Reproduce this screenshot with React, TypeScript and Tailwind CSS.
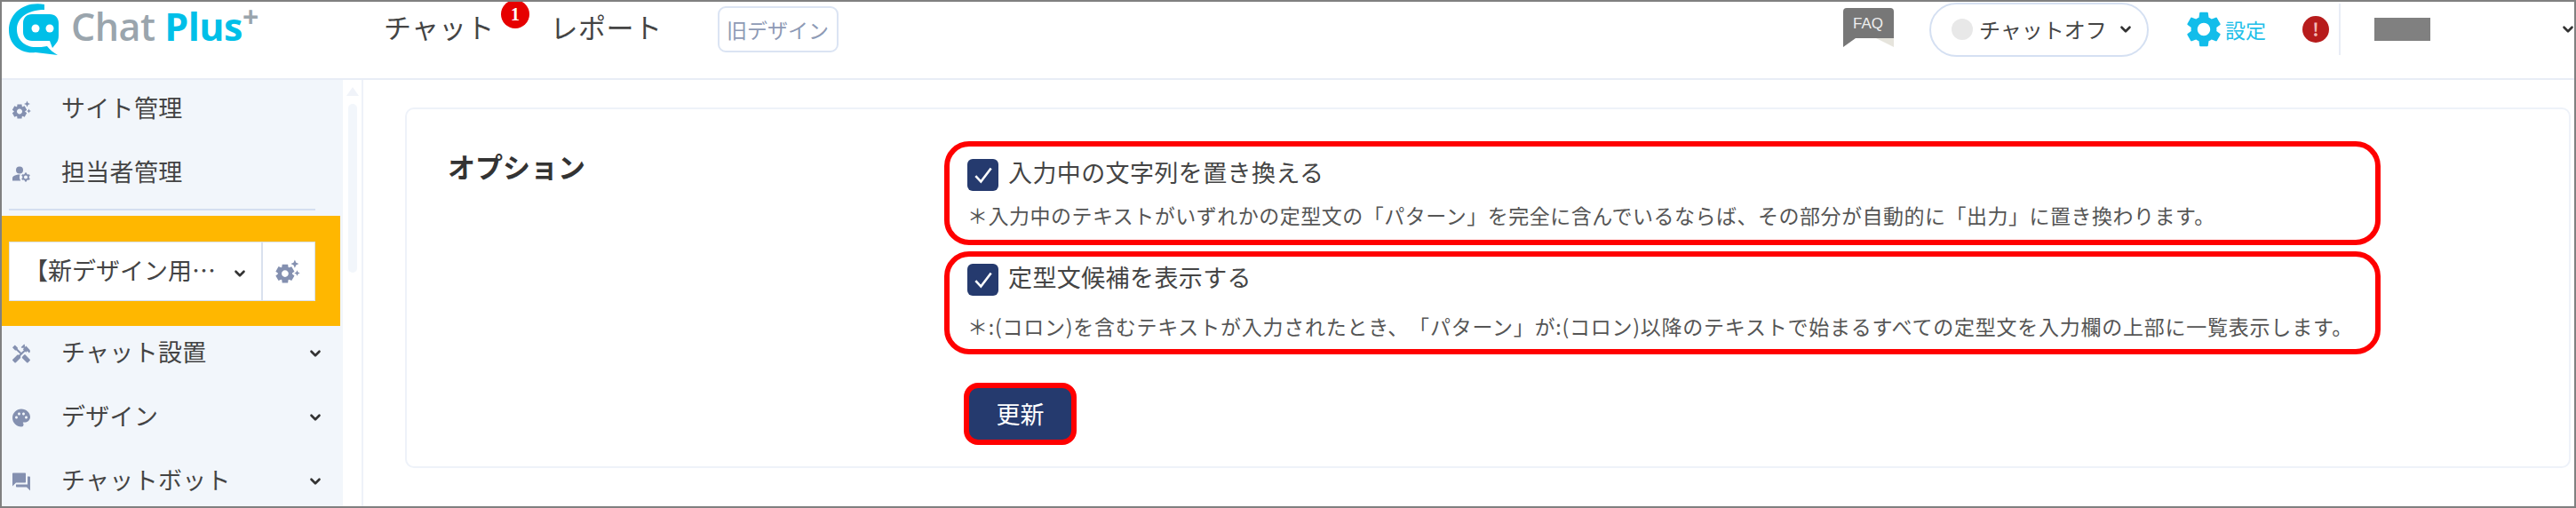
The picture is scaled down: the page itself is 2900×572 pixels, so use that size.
import { ChevronDown } from "lucide-react";
import {
  MdHandyman,
  MdManageAccounts,
  MdPalette,
  MdQuestionAnswer,
  MdSettings,
  MdSettingsSuggest,
} from "react-icons/md";
import type { ReactNode } from "react";

const jpFont = "font-['Noto_Sans_CJK_JP','Noto_Sans',sans-serif] [text-spacing-trim:space-all]";

const SideItem = ({ icon, label, arrow }: { icon: ReactNode; label: string; arrow?: boolean }) => (
  <div className="flex items-center h-[40px] pl-[10px] pr-[22px] text-[27px] text-[#444]">
    <span className="w-[24px] h-[24px] flex items-center justify-center text-[#8490b0] text-[31px] mr-[33px]">
      {icon}
    </span>
    <span className="-mt-[3px] tracking-[0.3px]">{label}</span>
    {arrow && <ChevronDown className="ml-auto w-[18px] h-[18px] text-[#333]" strokeWidth={3.5} />}
  </div>
);

const OptionBox = ({
  label,
  note,
  className,
  noteClass,
}: {
  label: string;
  note: string;
  className: string;
  noteClass: string;
}) => (
  <div className={"w-[1617px] border-[6px] border-[#ff0000] rounded-[28px] pl-[20px] " + className}>
    <div className="flex items-center h-[36px]">
      <span className="w-[35px] h-[36px] rounded-[6px] bg-[#253a6e] flex items-center justify-center">
        <svg viewBox="0 0 24 24" className="w-[26px] h-[26px]" fill="none" stroke="#fff" strokeWidth="2.4">
          <path d="M4 13l5.5 6L20 5" />
        </svg>
      </span>
      <span className="ml-[11px] -mt-[5px] text-[27px] tracking-[0.4px] text-[#444] whitespace-nowrap">{label}</span>
    </div>
    <p className={"text-[23px] leading-[32px] text-[#555] whitespace-nowrap " + noteClass}>{note}</p>
  </div>
);

const Logo = () => (
  <div className="flex items-start w-[430px] pl-[8px] h-[62px] pt-[2px]">
    <svg viewBox="0 0 56 58" className="w-[56px] h-[58px] shrink-0">
      <path
        d="M40 1C16-3 0 12 0 30c0 17 14 27 30 25l25 3c-5-3-9-6-12-10-4 1-9 1-13 1C18 49 9 41 9 29 9 17 20 7 40 7z"
        fill="#00bfe8"
      />
      <path d="M26 12h20c6 0 10 4 10 10v14c0 4-1 7-3 9l-4 5-3-8H26c-6 0-10-4-10-10V22c0-6 4-10 10-10z" fill="#00bfe8" />
      <circle cx="30" cy="28" r="4.5" fill="#fff" />
      <circle cx="46" cy="28" r="4.5" fill="#fff" />
    </svg>
    <span className="ml-[14px] text-[43px] leading-[52px] font-semibold font-['Open_Sans',sans-serif] tracking-[-0.5px] text-[#9aa5ad] whitespace-nowrap">
      Chat <span className="text-[#00bfe8] font-bold">Plus</span>
    </span>
    <span className="text-[32px] leading-[30px] font-bold text-[#9aa5ad] font-['Open_Sans',sans-serif]">+</span>
  </div>
);

const Header = () => (
  <header className="h-[88px] border-b-2 border-[#e8edf6] shrink-0">
    <div className="flex items-center h-[62px]">
      <Logo />
      <div className="relative text-[31px] tracking-[0.2px] text-[#444] -mt-[6px] whitespace-nowrap">
        チャット
        <span className="absolute left-[132px] -top-[7px] w-[32px] h-[32px] rounded-full bg-[#e60000] flex items-center justify-center text-white text-[20px] leading-none font-bold font-['Liberation_Serif',serif]">
          1
        </span>
      </div>
      <div className="ml-[63px] text-[31px] tracking-[0.5px] text-[#444] -mt-[6px] whitespace-nowrap">レポート</div>
      <div className="ml-[62px] w-[136px] h-[52px] border-2 border-[#dbe4f3] rounded-[9px] flex items-center justify-center text-[23px] text-[#8e9ab5] whitespace-nowrap">
        旧デザイン
      </div>

      <div className="ml-auto flex items-center">
        <svg viewBox="0 0 57 44" className="w-[57px] h-[44px] -mt-[4px]">
          <path d="M37 34h20v10z" fill="#e6e4dc" />
          <path d="M4 0h49a4 4 0 0 1 4 4v30H14L0 44V4a4 4 0 0 1 4-4z" fill="#777" />
          <text x="28" y="23" textAnchor="middle" fontSize="17" fill="#eee" fontFamily="Liberation Sans, sans-serif">
            FAQ
          </text>
        </svg>
        <div className="ml-[40px] w-[247px] h-[61px] border-2 border-[#d5e0f2] rounded-full flex items-center pl-[23px]">
          <span className="w-[24px] h-[24px] rounded-full bg-[#e8e8e8]" />
          <span className="ml-[7px] text-[24px] text-[#444] whitespace-nowrap">チャットオフ</span>
          <ChevronDown className="ml-[12px] w-[18px] h-[18px] text-[#333]" strokeWidth={3.5} />
        </div>
        <MdSettings className="ml-[38px] w-[48px] h-[48px] text-[#12bdea]" />
        <span className="text-[23px] text-[#22bfe9] whitespace-nowrap">設定</span>
        <span className="ml-[41px] w-[30px] h-[30px] rounded-full bg-[#b71c1c] flex items-center justify-center text-[#f3b9b4] text-[20px] leading-none font-bold">
          !
        </span>
        <span className="ml-[11px] w-[2px] h-[58px] bg-[#e8edf6]" />
        <span className="ml-[38px] w-[63px] h-[26px] bg-[#808080]" />
        <ChevronDown className="ml-[146px] w-[18px] h-[18px] text-[#333] -mr-[2px]" strokeWidth={3.5} />
      </div>
    </div>
  </header>
);

const Sidebar = () => (
  <aside className="w-[384px] shrink-0 bg-[#f2f6fb] overflow-hidden">
    <div className="flex flex-col gap-[32px] pt-[13px]">
      <SideItem icon={<MdSettingsSuggest />} label="サイト管理" />
      <SideItem icon={<MdManageAccounts />} label="担当者管理" />
    </div>
    <div className="mt-[20px] ml-[8px] w-[345px] h-[2px] bg-[#d5dff0]" />
    <div className="mt-[6px] w-[381px] h-[124px] bg-[#ffb700] pt-[29px] pl-[8px]">
      <div className="w-[345px] h-[67px] bg-white border border-[#d9e1ee] flex items-center">
        <div className="w-[285px] h-full flex items-center pl-[16px] border-r-2 border-[#d9e1ee]">
          <span className="text-[27px] -mt-[3px] text-[#444] whitespace-nowrap">【新デザイン用…</span>
          <ChevronDown className="ml-[18px] w-[18px] h-[18px] text-[#333] mt-[4px]" strokeWidth={3.5} />
        </div>
        <MdSettingsSuggest className="ml-[12px] w-[31px] h-[31px] text-[#8490b0]" />
      </div>
    </div>
    <div className="flex flex-col gap-[32px] pt-[11px]">
      <SideItem icon={<MdHandyman />} label="チャット設置" arrow />
      <SideItem icon={<MdPalette />} label="デザイン" arrow />
      <SideItem icon={<MdQuestionAnswer />} label="チャットボット" arrow />
    </div>
  </aside>
);

const Scrollbar = () => (
  <div className="w-[23px] shrink-0 border-r-2 border-[#eef2f9] flex flex-col items-center pt-[8px]">
    <div className="w-0 h-0 border-l-[7px] border-r-[7px] border-b-[10px] border-l-transparent border-r-transparent border-b-[#f0f3f9]" />
    <div className="mt-[9px] w-[10px] h-[190px] rounded-full bg-[#f2f6fb]" />
  </div>
);

export default function App() {
  return (
    <div className={"w-[2900px] h-[572px] border-2 border-[#808080] bg-white overflow-hidden flex flex-col " + jpFont}>
      <Header />
      <div className="flex flex-1 min-h-0">
        <Sidebar />
        <Scrollbar />
        <main className="flex-1 pl-[47px] pr-[4px] pt-[31px]">
          <section className="h-[406px] border-2 border-[#eef2f9] rounded-[10px] flex pt-[36px]">
            <h2 className="w-[605px] pl-[46px] text-[31px] leading-[44px] font-bold text-[#333] shrink-0 whitespace-nowrap mt-[6px]">
              オプション
            </h2>
            <div>
              <OptionBox
                className="h-[117px] pt-[14px]"
                noteClass="mt-[11px] tracking-[0.5px]"
                label="入力中の文字列を置き換える"
                note="＊入力中のテキストがいずれかの定型文の「パターン」を完全に含んでいるならば、その部分が自動的に「出力」に置き換わります。"
              />
              <OptionBox
                className="h-[116px] mt-[7px] pt-[8px]"
                noteClass="mt-[18px] tracking-[0.76px]"
                label="定型文候補を表示する"
                note="＊:(コロン)を含むテキストが入力されたとき、「パターン」が:(コロン)以降のテキストで始まるすべての定型文を入力欄の上部に一覧表示します。"
              />
              <button className="mt-[32px] ml-[22px] w-[127px] h-[70px] border-[6px] border-[#ff0000] rounded-[16px] bg-[#253a6e] text-white text-[27px]">
                更新
              </button>
            </div>
          </section>
        </main>
      </div>
    </div>
  );
}
